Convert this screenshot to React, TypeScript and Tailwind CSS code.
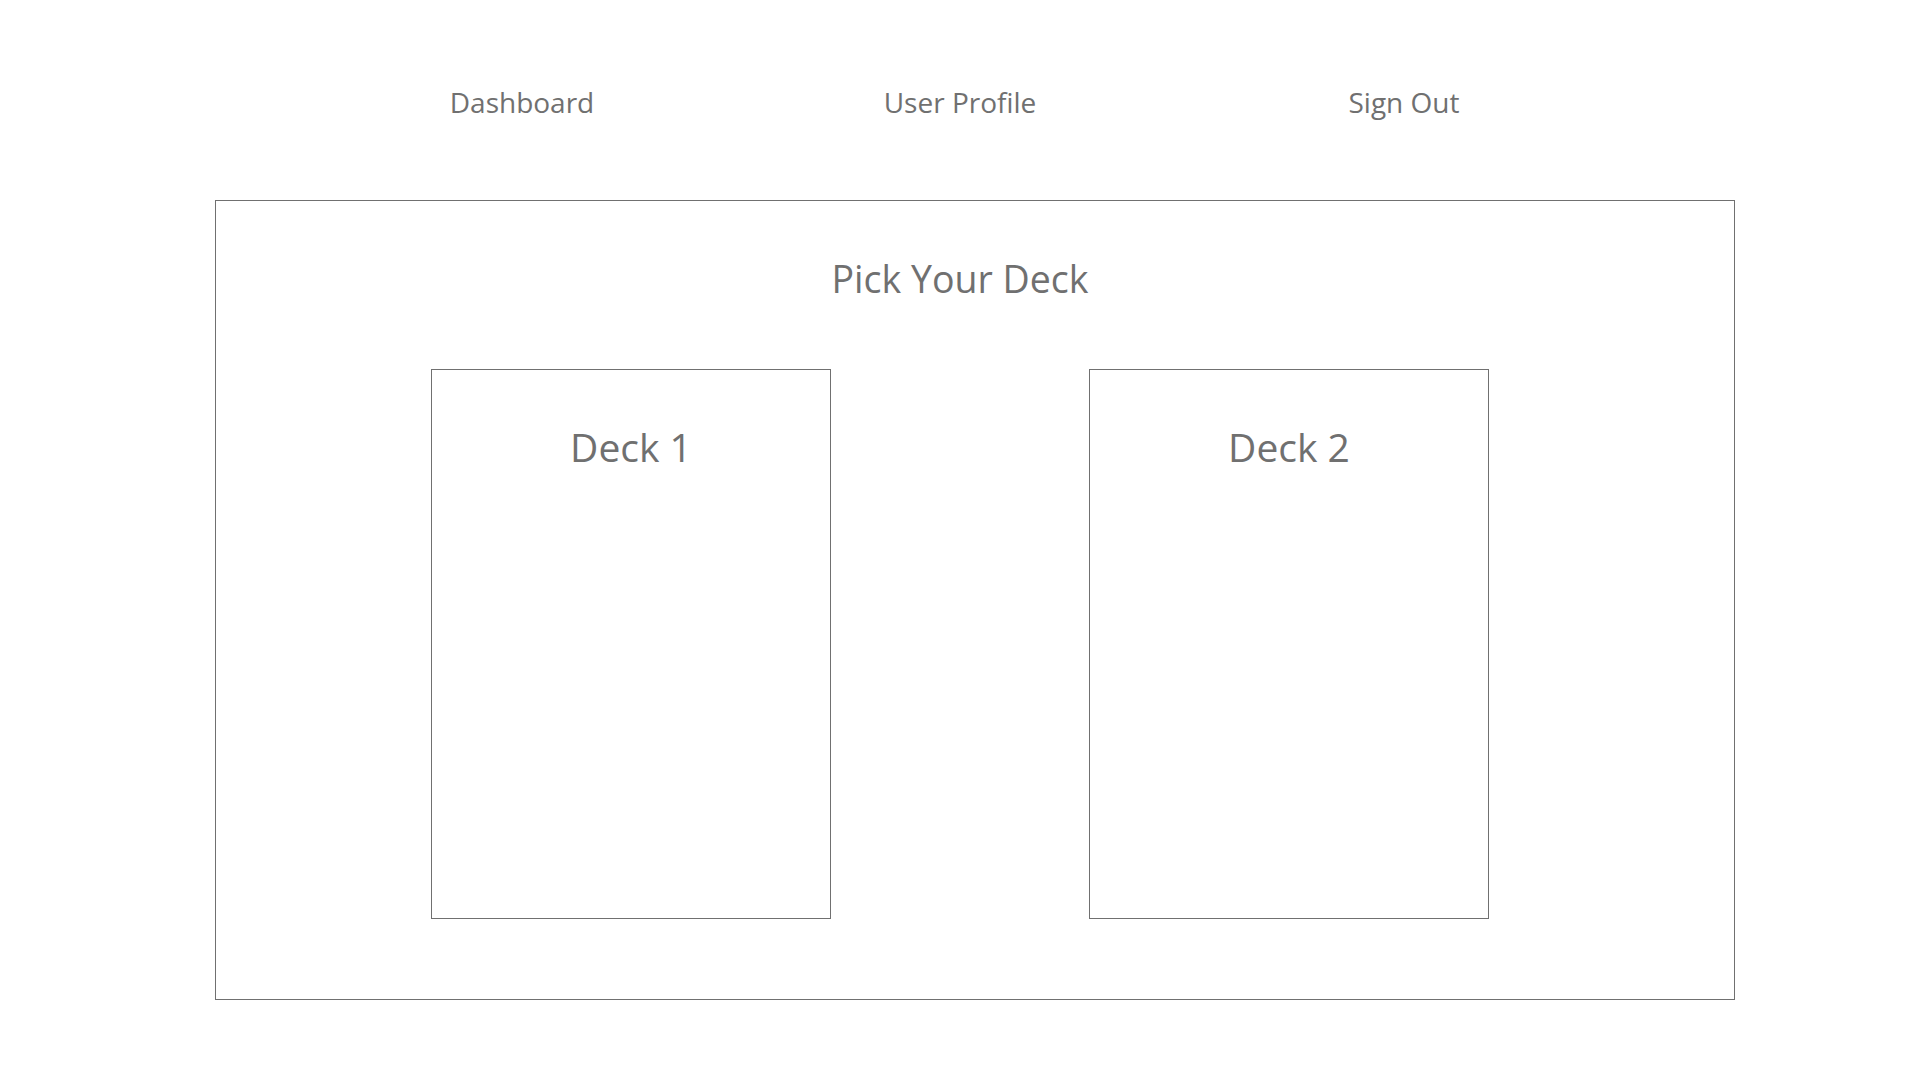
const NAV_LINKS = ["Dashboard", "User Profile", "Sign Out"]

const DeckCard = ({ label }: { label: string }) => (
  <div className="flex h-[550px] w-[400px] flex-col items-center border border-[#707070] pt-[49px]">
    <span className="text-[39px] leading-[56px]">{label}</span>
  </div>
)

export default function App() {
  return (
    <div
      className="h-[1080px] w-[1920px] bg-white text-[#707070]"
      style={{ fontFamily: '"Open Sans", "Noto Sans", sans-serif' }}
    >
      {/* Top nav */}
      <nav className="flex gap-[138px] pl-[372px] pt-[82px]">
        {NAV_LINKS.map((link, i) => (
          <a
            key={link}
            href="#"
            className={`w-[300px] text-center text-[28px] leading-[40px] ${i === 2 ? "ml-[6px]" : ""}`}
          >
            {link}
          </a>
        ))}
      </nav>

      {/* Deck picker */}
      <section className="ml-[215px] mt-[78px] h-[800px] w-[1520px] border border-[#707070]">
        <h1 className="pr-[30px] pt-[50px] text-center text-[37.5px] leading-[56px]">
          Pick Your Deck
        </h1>
        <div className="mt-[62px] flex gap-[258px] pl-[215px]">
          <DeckCard label="Deck 1" />
          <DeckCard label="Deck 2" />
        </div>
      </section>
    </div>
  )
}
